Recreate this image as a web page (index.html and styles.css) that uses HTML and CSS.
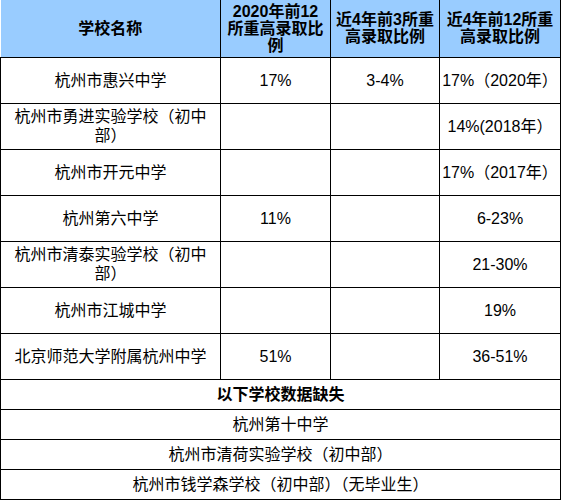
FILE: index.html
```html
<!DOCTYPE html>
<html lang="zh">
<head>
<meta charset="utf-8">
<title>学校录取比例</title>
<link rel="stylesheet" href="styles.css">
</head>
<body>
<table class="rates">
  <colgroup>
    <col class="c1"><col class="c2"><col class="c3"><col class="c4">
  </colgroup>
  <thead>
    <tr class="head">
      <th>学校名称</th>
      <th>2020年前12<br>所重高录取比<br>例</th>
      <th>近4年前3所重<br>高录取比例</th>
      <th>近4年前12所重<br>高录取比例</th>
    </tr>
  </thead>
  <tbody>
    <tr class="row"><td>杭州市惠兴中学</td><td>17%</td><td>3-4%</td><td>17%（2020年）</td></tr>
    <tr class="row"><td>杭州市勇进实验学校（初中<br>部）</td><td></td><td></td><td>14%(2018年）</td></tr>
    <tr class="row"><td>杭州市开元中学</td><td></td><td></td><td>17%（2017年）</td></tr>
    <tr class="row"><td>杭州第六中学</td><td>11%</td><td></td><td>6-23%</td></tr>
    <tr class="row"><td>杭州市清泰实验学校（初中<br>部）</td><td></td><td></td><td>21-30%</td></tr>
    <tr class="row"><td>杭州市江城中学</td><td></td><td></td><td>19%</td></tr>
    <tr class="row"><td>北京师范大学附属杭州中学</td><td>51%</td><td></td><td>36-51%</td></tr>
    <tr class="short"><td colspan="4" class="strong">以下学校数据缺失</td></tr>
    <tr class="short"><td colspan="4">杭州第十中学</td></tr>
    <tr class="short"><td colspan="4">杭州市清荷实验学校（初中部）</td></tr>
    <tr class="short"><td colspan="4">杭州市钱学森学校（初中部）（无毕业生）</td></tr>
  </tbody>
</table>
</body>
</html>
```
FILE: styles.css
```css
html, body {
  margin: 0;
  padding: 0;
  background: #ffffff;
}
body {
  font-family: "Liberation Sans", "Noto Sans CJK SC", sans-serif;
  font-size: 16px;
  color: #000000;
}
.rates {
  border-collapse: collapse;
  table-layout: fixed;
  width: 560px;
}
.c1 { width: 220px; }
.c2 { width: 110px; }
.c3 { width: 109px; }
.c4 { width: 121px; }
.rates th, .rates td {
  border: 1.5px solid #000000;
  padding: 0 2px;
  text-align: center;
  vertical-align: middle;
  line-height: 19px;
  font-weight: 400;
}
.rates th {
  background: #99ccff;
  font-weight: 700;
  line-height: 17px;
  border-top: none;
  border-left: none;
}
.head { height: 57px; }
.row { height: 46px; }
.short { height: 30px; }
.rates td.strong { font-weight: 700; }
```
